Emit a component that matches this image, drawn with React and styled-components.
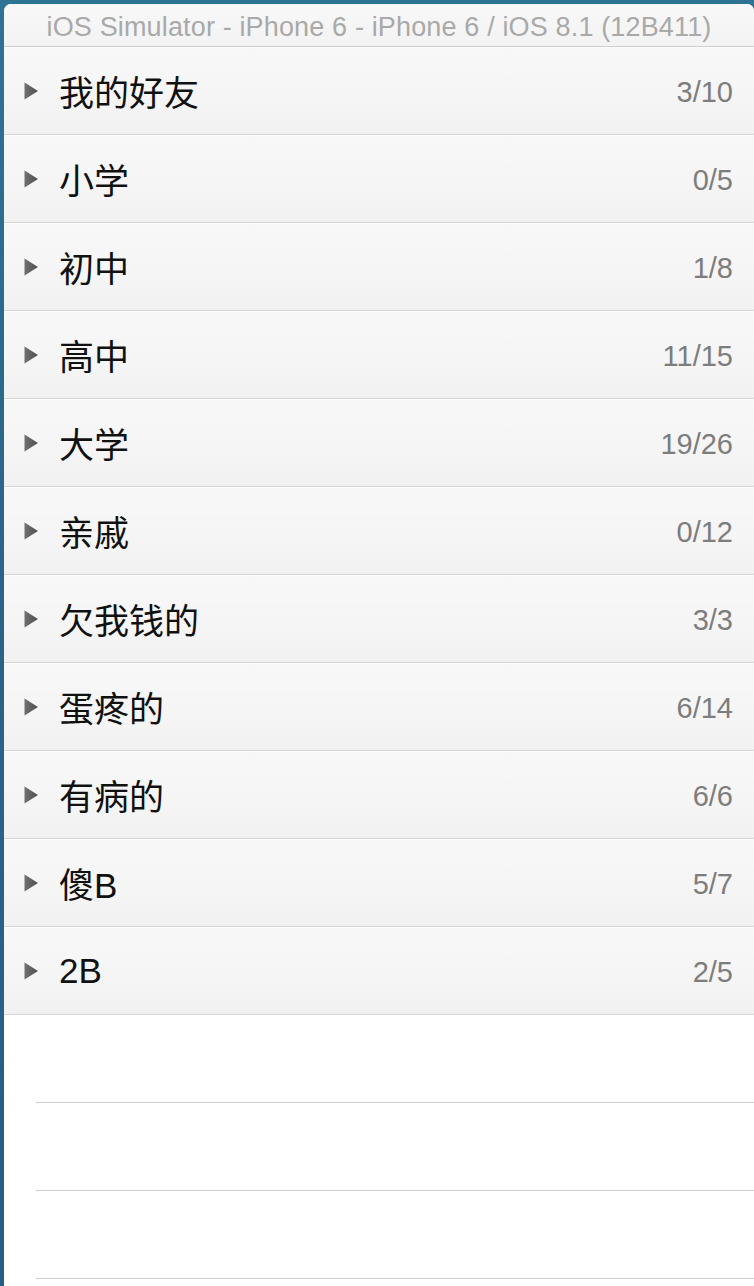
import React from "react";
import styled, { createGlobalStyle } from "styled-components";

const GlobalStyle = createGlobalStyle`
  html, body {
    margin: 0;
    padding: 0;
    background: #2b6a8c;
  }
  body {
    font-family: "Liberation Sans", "Noto Sans CJK SC", sans-serif;
  }
`;

const groups = [
  { name: "我的好友", online: 3, total: 10 },
  { name: "小学", online: 0, total: 5 },
  { name: "初中", online: 1, total: 8 },
  { name: "高中", online: 11, total: 15 },
  { name: "大学", online: 19, total: 26 },
  { name: "亲戚", online: 0, total: 12 },
  { name: "欠我钱的", online: 3, total: 3 },
  { name: "蛋疼的", online: 6, total: 14 },
  { name: "有病的", online: 6, total: 6 },
  { name: "傻B", online: 5, total: 7 },
  { name: "2B", online: 2, total: 5 },
];

const Desktop = styled.div`
  width: 754px;
  height: 1286px;
  padding: 4px 0 0 4px;
  box-sizing: border-box;
  overflow: hidden;
  background: linear-gradient(180deg, #2f7394 0%, #2a6689 40%, #275e84 100%);
`;

const Window = styled.div`
  height: 100%;
  background: #fff;
  border-radius: 7px 7px 0 0;
  overflow: hidden;
  display: flex;
  flex-direction: column;
`;

const TitleBar = styled.div`
  height: 43px;
  flex-shrink: 0;
  display: flex;
  align-items: center;
  justify-content: center;
  padding-top: 4px;
  box-sizing: border-box;
  background: linear-gradient(180deg, #f8f8f8 0%, #f3f3f3 100%);
  border-bottom: 1px solid #cfcfcf;
  color: #a9a9a9;
  font-size: 27px;
  letter-spacing: 0.15px;
  white-space: nowrap;
`;

const List = styled.div`
  display: flex;
  flex-direction: column;
`;

const GroupRow = styled.div`
  height: 87px;
  display: flex;
  align-items: center;
  padding: 0 21px 0 20px;
  background: linear-gradient(180deg, #f8f8f8 0%, #f5f5f5 60%, #f1f1f1 100%);
  border-bottom: 1px solid #d6d6d6;
  box-shadow: inset 0 1px 0 #fbfbfb;
`;

const Arrow = styled.svg`
  width: 14px;
  height: 18px;
  flex-shrink: 0;
  margin-right: 21px;
`;

const GroupName = styled.div`
  flex: 1;
  font-size: 35px;
  color: #111;
`;

const Count = styled.div`
  font-size: 29px;
  color: #7d7d7d;
  padding-top: 3px;
`;

const EmptyRow = styled.div`
  height: 87px;
  margin-left: 32px;
  border-bottom: 1px solid #cdcdcd;
`;

const TriangleIcon = () => (
  <Arrow viewBox="0 0 14 18">
    <defs>
      <linearGradient id="tri" x1="0" x2="1" y1="0" y2="0">
        <stop offset="0" stopColor="#707070" />
        <stop offset="1" stopColor="#4f4f4f" />
      </linearGradient>
    </defs>
    <polygon points="0.5,0.5 14,9 0.5,17.5" fill="url(#tri)" />
  </Arrow>
);

const App = () => {
  return (
    <Desktop>
      <GlobalStyle />
      <Window>
        <TitleBar>iOS Simulator - iPhone 6 - iPhone 6 / iOS 8.1 (12B411)</TitleBar>
        <List>
          {groups.map((g) => (
            <GroupRow key={g.name}>
              <TriangleIcon />
              <GroupName>{g.name}</GroupName>
              <Count>
                {g.online}/{g.total}
              </Count>
            </GroupRow>
          ))}
          <EmptyRow />
          <EmptyRow />
          <EmptyRow />
        </List>
      </Window>
    </Desktop>
  );
};

export default App;
